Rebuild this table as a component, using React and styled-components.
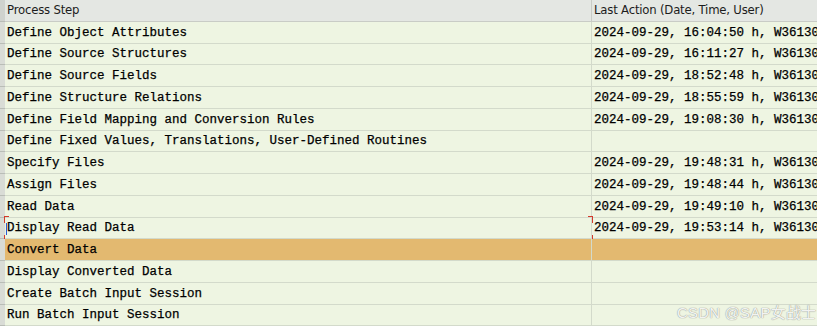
import React from "react";
import styled, { createGlobalStyle } from "styled-components";

const GlobalStyle = createGlobalStyle`
  html, body {
    margin: 0;
    padding: 0;
    background: #eef5e2;
    overflow: hidden;
  }
`;

const Screen = styled.div`
  position: relative;
  width: 817px;
  height: 326px;
  overflow: hidden;
  background: #eef5e2;
`;

const Row = styled.div`
  display: grid;
  grid-template-columns: 5px 587px 1fr;
  height: 21.75px;
  box-sizing: border-box;
  position: relative;
  background: ${(p) => (p.$selected ? "#e3b970" : "#eef5e2")};
`;

const HeaderRow = styled(Row)`
  background: #e4e7e3;
`;

const Gutter = styled.div`
  background: ${(p) => (p.$head ? "#cfd2ce" : "#d9dcd6")};
  border-bottom: 1px solid #b9bdb6;
  box-sizing: border-box;
`;

const Cell = styled.div`
  display: flex;
  align-items: center;
  padding-left: 2px;
  padding-top: 1px;
  border-bottom: 1px solid ${(p) => (p.$head ? "#c9ccc6" : "#d3dacb")};
  border-right: ${(p) => (p.$last ? "none" : "1px solid #d3dacb")};
  box-sizing: border-box;
  overflow: hidden;
  white-space: nowrap;
  font-family: "Liberation Mono", "DejaVu Sans Mono", monospace;
  font-size: 12.5px;
  color: #000;
  -webkit-text-stroke: 0.25px #000;
`;

const HeadCell = styled(Cell)`
  font-family: "DejaVu Sans", "Liberation Sans", sans-serif;
  font-size: 11.7px;
  letter-spacing: -0.2px;
  color: #1c1c1c;
  -webkit-text-stroke: 0;
  border-right-color: #c9ccc6;
  padding-top: 0;
`;

const Corner = styled.span`
  position: absolute;
  width: 4px;
  height: 6px;
  border-color: #d33a2c;
  border-style: solid;
  border-width: 0;
  ${(p) => (p.$top ? "top: -2px;" : "bottom: -3px;")}
  ${(p) => (p.$left ? "left: 4px;" : "left: 588px;")}
  ${(p) => (p.$top ? "border-top-width: 1.5px;" : "border-bottom-width: 1.5px;")}
  ${(p) => (p.$left ? "border-left-width: 1.5px;" : "border-right-width: 1.5px;")}
`;

const Caret = styled.span`
  position: absolute;
  left: 6px;
  top: 5px;
  width: 1px;
  height: 12px;
  background: #2a5bd7;
`;

const Watermark = styled.div`
  position: absolute;
  left: 677px;
  top: 301px;
  white-space: nowrap;
  font-family: "Liberation Sans", "Noto Sans CJK SC", sans-serif;
  font-size: 15px;
  color: rgba(255, 255, 255, 0.9);
  text-shadow: 0 0 1px #9a9e96, 0 0 1px #9a9e96;
  letter-spacing: 0.2px;
`;

const rows = [
  ["Define Object Attributes", "2024-09-29, 16:04:50 h, W36130"],
  ["Define Source Structures", "2024-09-29, 16:11:27 h, W36130"],
  ["Define Source Fields", "2024-09-29, 18:52:48 h, W36130"],
  ["Define Structure Relations", "2024-09-29, 18:55:59 h, W36130"],
  ["Define Field Mapping and Conversion Rules", "2024-09-29, 19:08:30 h, W36130"],
  ["Define Fixed Values, Translations, User-Defined Routines", ""],
  ["Specify Files", "2024-09-29, 19:48:31 h, W36130"],
  ["Assign Files", "2024-09-29, 19:48:44 h, W36130"],
  ["Read Data", "2024-09-29, 19:49:10 h, W36130"],
  ["Display Read Data", "2024-09-29, 19:53:14 h, W36130"],
  ["Convert Data", ""],
  ["Display Converted Data", ""],
  ["Create Batch Input Session", ""],
  ["Run Batch Input Session", ""],
];

export default function App() {
  return (
    <>
      <GlobalStyle />
      <Screen>
        <HeaderRow>
          <Gutter $head />
          <HeadCell $head>Process Step</HeadCell>
          <HeadCell $head $last>Last Action (Date, Time, User)</HeadCell>
        </HeaderRow>
        {rows.map(([step, action]) => (
          <Row key={step} $selected={step === "Convert Data"}>
            <Gutter />
            <Cell>{step}</Cell>
            <Cell $last>{action}</Cell>
            {step === "Display Read Data" && (
              <>
                <Corner $top $left />
                <Corner $left />
                <Corner $top />
                <Corner />
                <Caret />
              </>
            )}
          </Row>
        ))}
        <Watermark>CSDN @SAP女战士</Watermark>
      </Screen>
    </>
  );
}
